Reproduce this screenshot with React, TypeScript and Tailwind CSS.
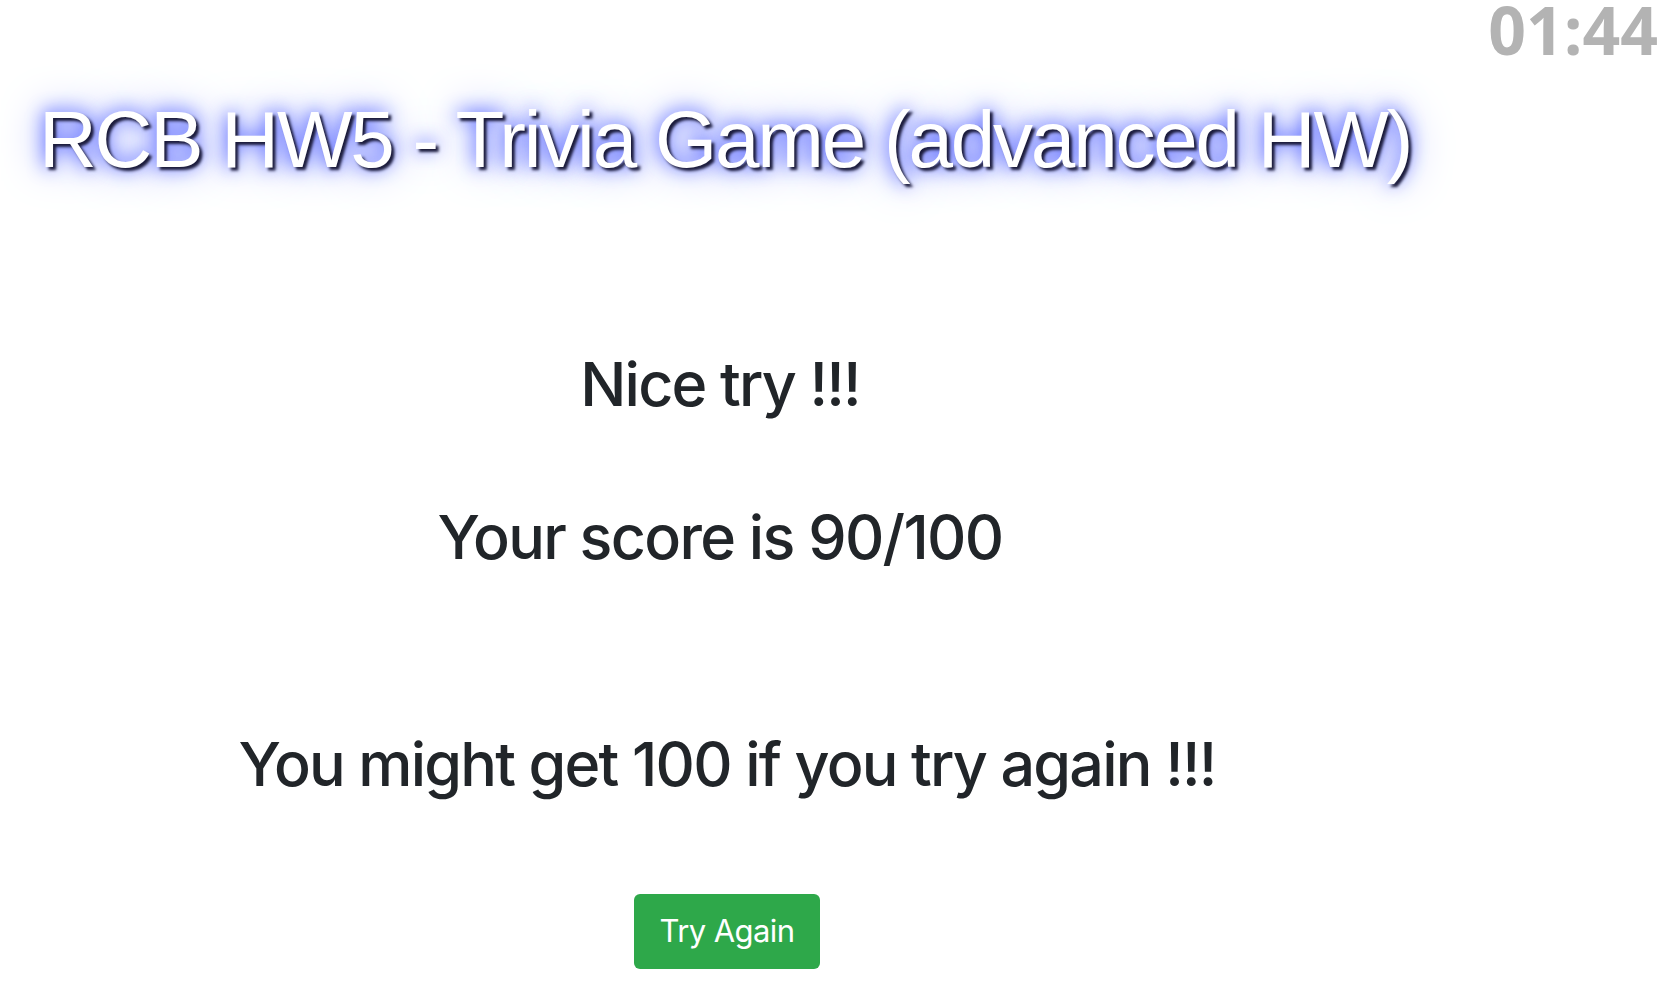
import React from "react";

export default function App() {
  return (
    <div className="min-h-screen w-full bg-white">
      <div className="flex justify-end pr-[20px]">
        <div
          className="text-[66px] font-bold leading-[58px] text-[#b3b3b3]"
          style={{ fontFamily: '"Open Sans", sans-serif' }}
        >
          01:44
        </div>
      </div>
      <h1
        className="mt-[34px] pl-[39px] text-[80px] leading-[96px] tracking-[-2.2px] text-white [text-shadow:3px_3px_3px_#1a1a3a,0_0_18px_#3344ff,0_0_40px_#7788ff]"
        style={{ fontFamily: '"Liberation Sans", Arial, sans-serif' }}
      >
        RCB HW5 - Trivia Game (advanced HW)
      </h1>
      <div
        className="flex w-[1454px] flex-col items-center text-center text-[#212529]"
        style={{ fontFamily: 'Inter, "Noto Sans", sans-serif' }}
      >
        <div className="mt-[160px] pr-[14px] text-[61px] font-medium leading-[73px] tracking-[-1.8px]">Nice try !!!</div>
        <div className="mt-[80px] pr-[14px] text-[61px] font-medium leading-[73px] tracking-[-1.7px]">Your score is 90/100</div>
        <div className="mt-[154px] text-[61px] font-medium leading-[73px] tracking-[-1.8px]">
          You might get 100 if you try again !!!
        </div>
        <button
          className="mt-[93px] h-[75px] w-[186px] rounded-[6px] bg-[#2ea84a] text-[31px] tracking-[-0.6px] text-white"
          style={{ fontFamily: 'Inter, "Noto Sans", sans-serif' }}
        >
          Try Again
        </button>
      </div>
    </div>
  );
}
